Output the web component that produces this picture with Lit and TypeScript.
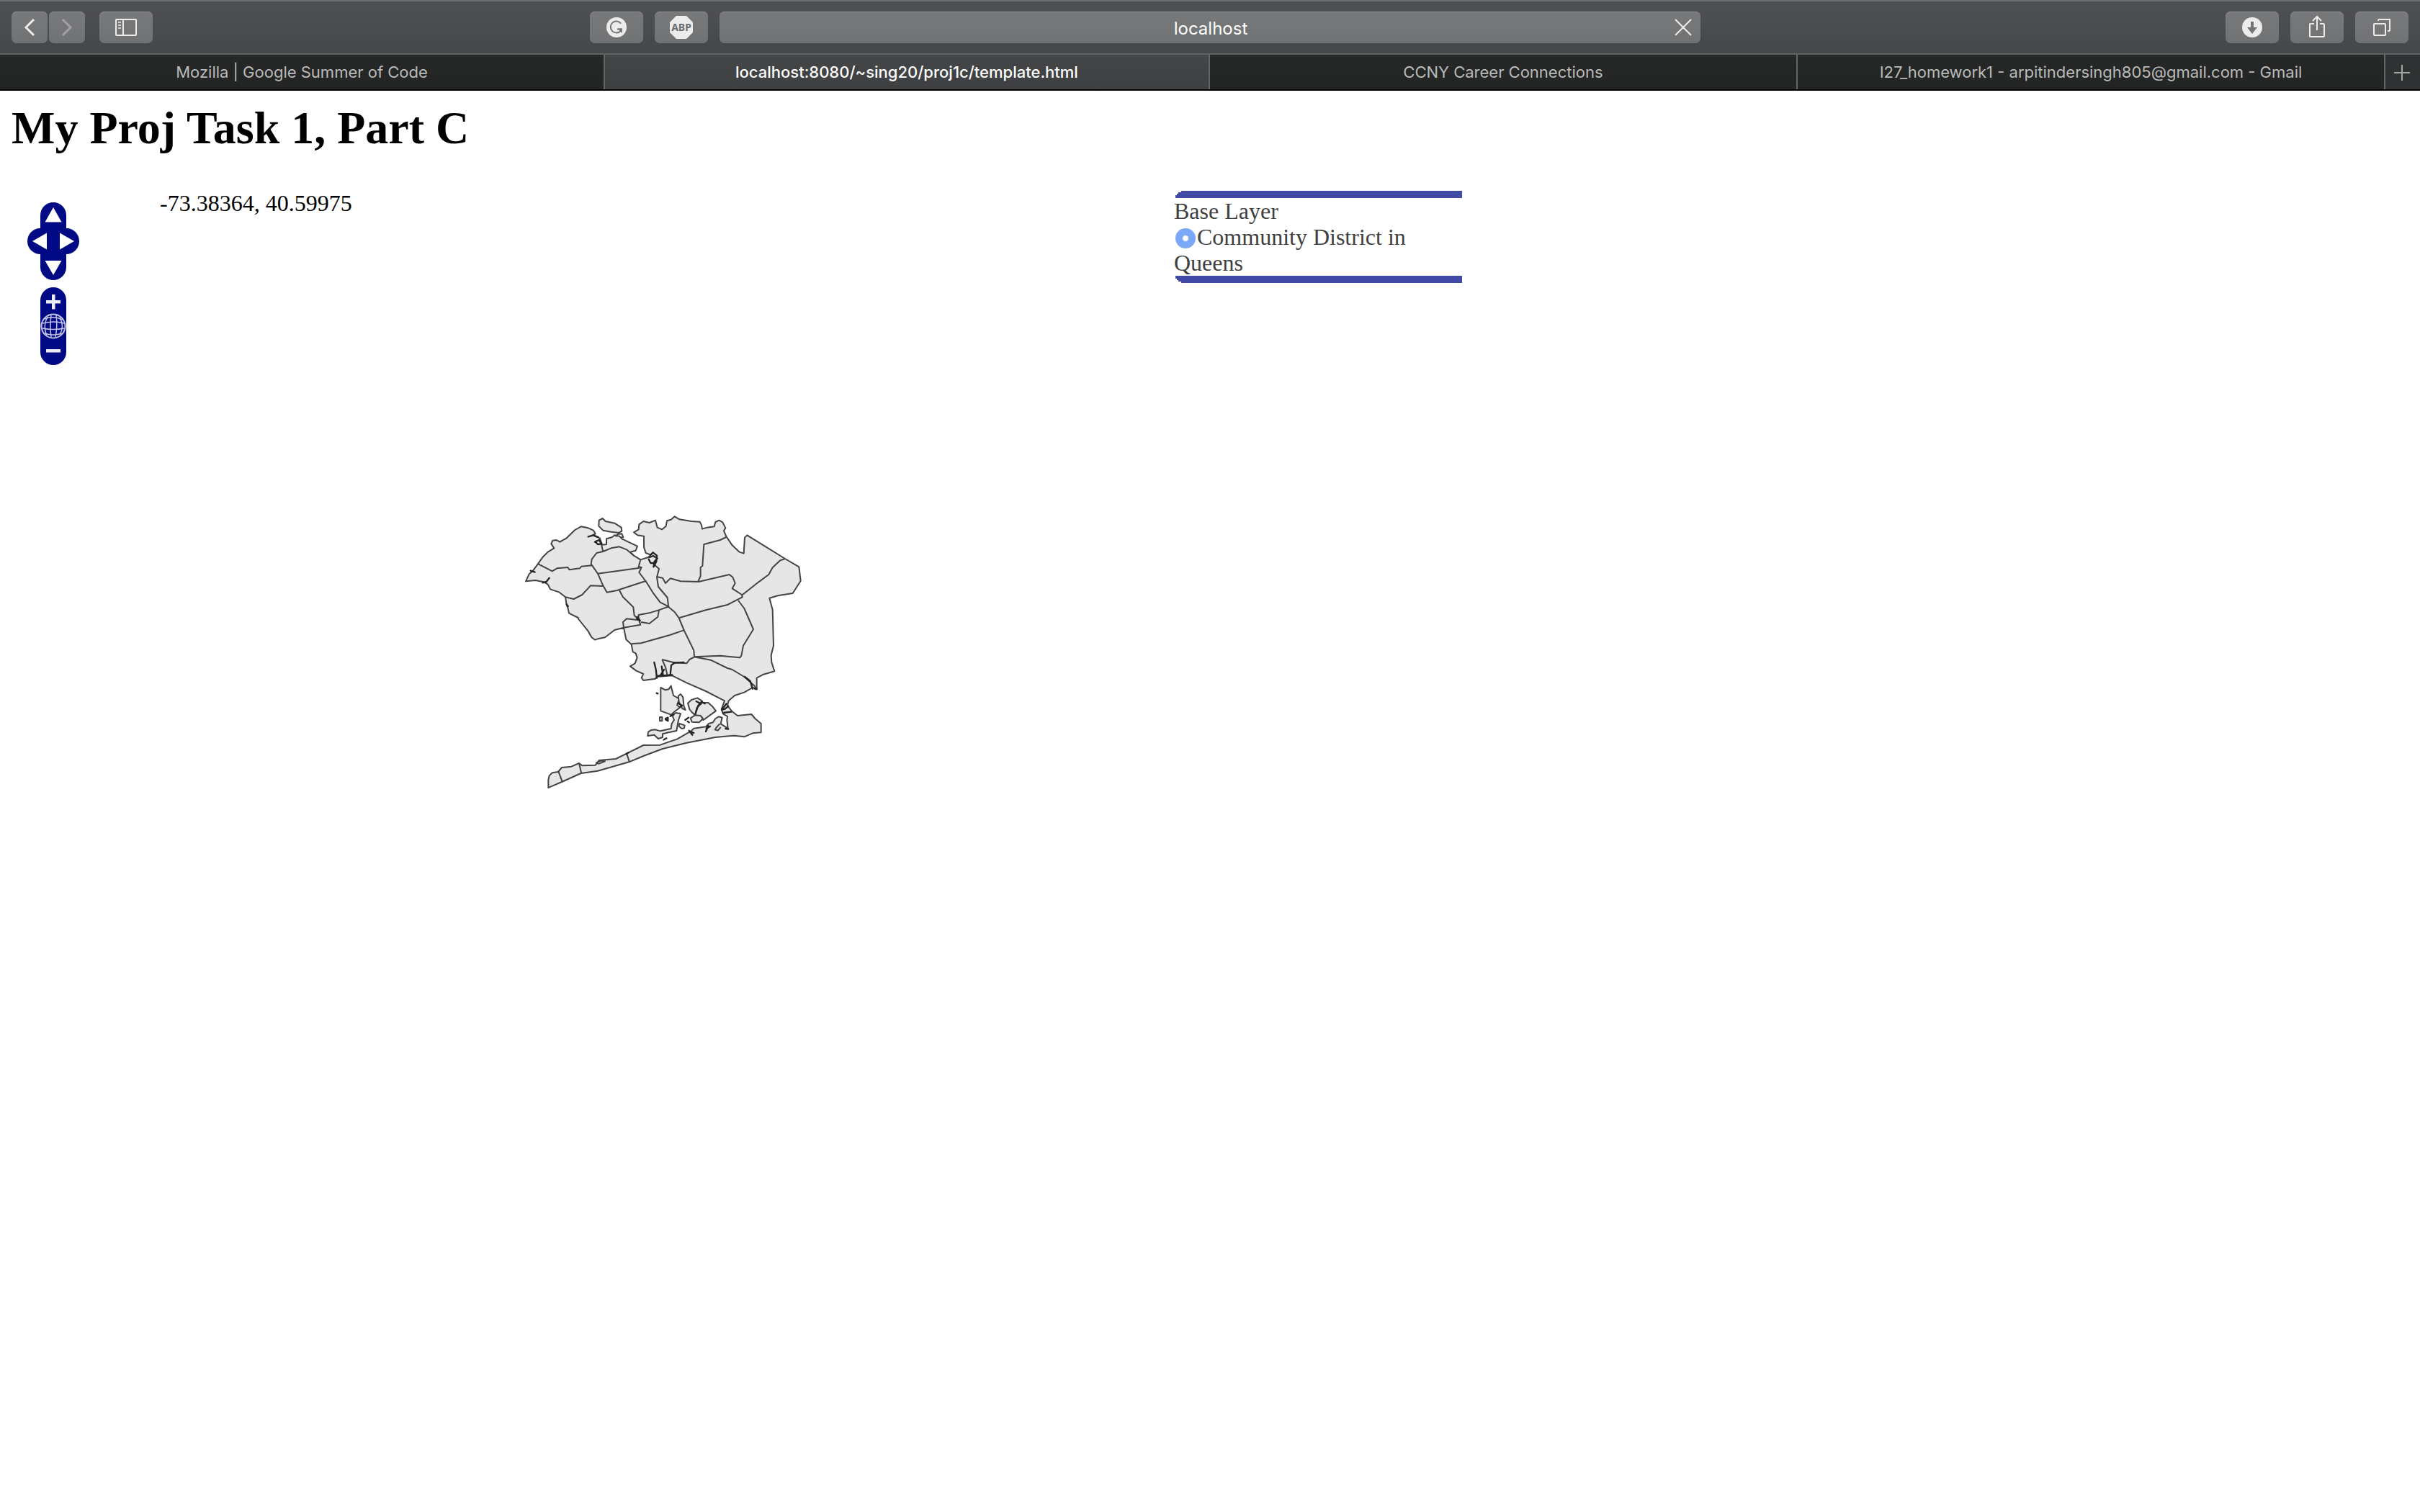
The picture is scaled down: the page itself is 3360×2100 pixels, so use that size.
import { LitElement, html, css, svg } from "lit";
import { customElement } from "lit/decorators.js";

const TABS = [
  { title: "Mozilla | Google Summer of Code", size: "wide" },
  { title: "localhost:8080/~sing20/proj1c/template.html", size: "wide active" },
  { title: "CCNY Career Connections", size: "" },
  { title: "I27_homework1 - arpitindersingh805@gmail.com - Gmail", size: "" },
];

const LAND =
  "30,322 44,292 60,278 82,248 100,222 122,200 148,184 136,166 142,152 158,150 172,158 200,142 235,108 260,94 290,100 312,110 320,124 308,130 338,142 348,170 366,168 366,145 390,138 400,130 420,134 432,146 495,176 488,194 466,200 480,215 508,232 540,222 550,212 530,204 522,180 522,134 495,130 480,118 500,106 502,85 520,72 545,78 570,68 578,98 598,106 614,92 618,70 635,65 650,52 670,64 720,72 755,74 762,88 765,104 785,98 815,94 820,75 835,68 850,76 862,100 855,112 865,135 890,172 920,200 938,206 942,140 952,130 1110,228 1168,262 1175,320 1142,372 1080,382 1045,392 1058,440 1062,590 1052,630 1054,660 1066,697 1020,710 992,725 992,770 975,765 940,785 900,798 875,820 870,840 890,865 912,882 970,876 985,894 1010,915 1010,952 975,955 940,970 900,965 820,972 700,995 600,1020 520,1050 460,1075 330,1112 260,1122 180,1158 124,1182 124,1150 128,1132 140,1120 165,1116 180,1098 220,1094 252,1080 265,1090 320,1088 335,1068 405,1062 450,1040 520,1005 590,1004 635,988 660,980 720,945 730,935 780,928 792,915 810,910 820,894 834,886 848,890 842,916 872,935 868,900 870,885 852,875 845,855 858,820 780,780 700,745 640,715 575,720 570,728 520,735 512,724 520,708 490,695 465,676 485,664 494,640 488,622 476,616 470,585 448,565 438,515 400,525 360,556 330,562 318,566 304,555 290,530 250,480 248,474 210,455 206,436 200,420 195,388 170,368 132,355 122,335 105,325 70,318";

const ISLANDS = [
  "335,68 350,60 362,72 400,80 428,98 430,112 418,120 385,116 352,110 334,92",
  "592,765 612,775 625,772 635,758 645,798 670,812 660,838 672,848 650,865 635,878 592,862",
  "665,800 675,792 685,805 688,840 695,858 682,852 668,825",
  "640,880 655,870 675,874 666,900 658,945 625,952 600,958 600,972 582,978 565,962 538,966 540,950 552,942 570,940 590,946 635,936 638,915 648,900",
  "670,915 692,922 690,934 680,936 668,926",
  "705,830 720,816 745,808 766,822 748,845 735,880 722,868 712,855",
  "765,828 790,828 806,842 822,862 770,900 735,882 742,850",
  "716,892 735,880 758,882 768,894 752,910 722,908",
  "588,888 598,888 598,904 588,904",
];

const BORDERS = [
  "82,250 140,280 160,268 205,264 212,274 255,268 262,260 305,256",
  "338,142 352,198 325,204 305,230 302,250 330,290 352,340 368,368 410,360 520,324 530,322 502,285 512,264 500,262 508,232",
  "352,198 385,184 420,178 450,190 480,215",
  "330,290 505,266",
  "195,388 230,396 265,378 300,340 352,342",
  "420,360 435,388 478,430 482,465 500,480 508,503 438,515 435,492 450,478 500,484 500,462 545,454 590,440 628,426",
  "530,322 560,370 590,410 620,425",
  "562,250 585,270 576,305 582,345 620,390 624,425",
  "585,442 580,470 545,498 510,492",
  "470,583 510,580 630,546 688,526",
  "620,425 650,450 668,475 690,528 730,610 732,635",
  "668,475 780,442 870,420 932,388 930,378 890,352 902,330 892,305 878,294 750,324 675,322 632,310 612,330 600,308 578,304",
  "865,138 840,150 772,168 766,258 758,264 758,300 748,322",
  "930,380 1000,325 1042,294 1058,265 1090,235 1110,228",
  "915,402 940,435 978,522 936,590 928,632 922,640 840,632 732,637 712,648 700,664 645,660 598,648",
  "732,637 800,650 870,684 890,690 940,720 980,755 992,770",
  "450,1040 462,1075",
  "252,1080 262,1124",
  "165,1112 182,1156",
  "322,1078 345,1070 360,1072 335,1082 322,1080",
  "838,916 825,930 818,940 830,944 842,930",
  "598,648 612,680 620,715",
  "404,136 412,126 430,124 436,138 424,140",
];

const CREEKS = [
  "290,136 312,130 332,138",
  "318,158 335,150 346,166 330,168 320,158",
  "550,212 560,202 576,215 574,240 562,262 566,240 578,226 560,216 546,222",
  "542,230 550,246 568,246",
  "50,278 68,284",
  "100,328 116,324 128,308",
  "200,418 206,426",
  "494,470 506,486 492,476",
  "565,660 572,690 576,725",
  "596,676 602,714 592,712 606,690",
  "650,662 636,672 632,712",
  "645,662 688,660",
  "580,716 640,712",
  "942,720 965,738 975,770 968,748",
  "992,772 984,770",
  "866,832 846,858 860,854 874,842",
  "852,870 886,866",
  "710,944 724,962 716,948 730,954",
  "780,948 790,924 782,936 798,926",
  "862,936 874,938",
  "736,876 748,840 762,824 776,832",
  "740,822 758,832",
  "664,830 682,840 672,846",
  "612,894 622,890 622,904 612,898",
  "605,982 616,976",
  "575,788 580,790",
  "694,900 708,890",
  "704,906 710,910",
  "448,1042 458,1036",
  "632,884 646,878",
];

@customElement("browser-toolbar")
class BrowserToolbar extends LitElement {
  static styles = css`
    :host { display: block; font-family: Inter, "Liberation Sans", sans-serif; }
    .bar {
      display: grid;
      grid-template-columns: minmax(0, 999fr) minmax(0, 1362fr) minmax(0, 999fr);
      align-items: center;
      height: 76px;
      box-sizing: border-box;
      border-top: 2px solid #6a6c6e;
      border-bottom: 2px solid #606263;
      background: linear-gradient(#505153, #454648);
    }
    .zone { display: flex; align-items: center; padding: 0 16px; }
    .history { display: flex; gap: 2px; margin-right: 20px; }
    .extensions { display: flex; gap: 16px; margin-left: auto; }
    .right { justify-content: flex-end; gap: 16px; }
    button { font: inherit; border: 0; margin: 0; padding: 0; cursor: default; }
    .tool {
      display: flex;
      align-items: center;
      justify-content: center;
      width: 74px;
      height: 44px;
      border-radius: 7px;
      background: linear-gradient(#78797b, #717274);
      box-shadow: inset 0 1px #8a8b8d;
      color: #ececec;
    }
    .narrow { width: 50px; }
    .dim { color: #a0a1a2; }
    .icon { display: block; width: 36px; height: 36px; fill: none; stroke: currentColor; stroke-width: 2; }
    .solid { fill: currentColor; stroke: none; }
    .cut { fill: none; stroke: #747577; stroke-width: 2; }
    .cutfill { fill: #747577; stroke: none; }
    .abp { font: bold 14px "Noto Sans", sans-serif; fill: #6a6b6d; stroke: none; text-anchor: middle; }
    .address {
      display: grid;
      grid-template-columns: 48px minmax(0, 1fr) 48px;
      align-items: center;
      height: 44px;
      border-radius: 7px;
      background: linear-gradient(#78797b, #717274);
      box-shadow: inset 0 1px #8a8b8d;
    }
    .url {
      grid-column: 2;
      width: 100%;
      box-sizing: border-box;
      border: 0;
      padding: 2px 0 0 2px;
      outline: none;
      background: none;
      color: #fff;
      font: 24px Inter, sans-serif;
      text-align: center;
    }
    .stop { background: none; color: #ececec; display: flex; justify-content: center; }
    .tabs {
      display: flex;
      height: 50px;
      box-sizing: border-box;
      border-bottom: 2px solid #000;
      background: linear-gradient(#262827, #232524);
    }
    .tab {
      flex: 816 1 0;
      min-width: 0;
      box-sizing: border-box;
      border-left: 2px solid #636566;
      background: none;
      color: #b9bab9;
      font-size: 22px;
      line-height: 44px;
      white-space: nowrap;
      overflow: hidden;
      text-overflow: ellipsis;
    }
    .wide { flex-grow: 840; }
    .tab:first-child { border-left: 0; }
    .active { background: linear-gradient(#454648, #3e3f41); color: #fff; font-weight: 500; }
    .add {
      flex: none;
      display: flex;
      align-items: center;
      justify-content: center;
      width: 50px;
      box-sizing: border-box;
      border-left: 2px solid #636566;
      background: #303133;
      color: #a5a6a6;
    }
  `;

  render() {
    return html`
      <div class="bar">
        <div class="zone">
          <div class="history">
            <button class="tool narrow" aria-label="Back">
              <svg class="icon" viewBox="0 0 36 36"><path d="M24 7 13 18 24 29" stroke-width="3"/></svg>
            </button>
            <button class="tool narrow dim" aria-label="Forward">
              <svg class="icon" viewBox="0 0 36 36"><path d="M12 7 23 18 12 29" stroke-width="3"/></svg>
            </button>
          </div>
          <button class="tool" aria-label="Show sidebar">
            <svg class="icon" viewBox="0 0 36 36">
              <rect x="4" y="7" width="28" height="22" rx="1"/>
              <path d="M14 7V29"/>
              <path d="M7 11h4M7 15h4M7 19h4" opacity=".75"/>
            </svg>
          </button>
          <div class="extensions">
            <button class="tool" aria-label="Grammarly">
              <svg class="icon" viewBox="0 0 36 36">
                <circle class="solid" cx="18" cy="18" r="14"/>
                <path class="cut" d="M24 12.5A8 8 0 1 0 24 22.5"/>
                <path class="cut" d="M19 20.500H25"/>
                <path class="cutfill" d="M20 19.500H26V26L23.500 24z"/>
              </svg>
            </button>
            <button class="tool" aria-label="Adblock Plus">
              <svg class="icon" viewBox="0 0 36 36">
                <path class="solid" d="M11 2H25L34 11V25L25 34H11L2 25V11z"/>
                <text class="abp" x="18" y="23">ABP</text>
              </svg>
            </button>
          </div>
        </div>
        <div class="address">
          <input class="url" type="text" aria-label="Address" .value=${"localhost"} />
          <button class="stop" aria-label="Stop loading">
            <svg class="icon" viewBox="0 0 36 36"><path d="M7 7 29 29M29 7 7 29"/></svg>
          </button>
        </div>
        <div class="zone right">
          <button class="tool" aria-label="Downloads">
            <svg class="icon" viewBox="0 0 36 36">
              <circle class="solid" cx="18" cy="18" r="14"/>
              <path class="cutfill" d="M16 10h4v8h5l-7 9-7-9h5z"/>
            </svg>
          </button>
          <button class="tool" aria-label="Share">
            <svg class="icon" viewBox="0 0 36 36">
              <path d="M14 13H9Q8 13 8 14V30Q8 31 9 31H27Q28 31 28 30V14Q28 13 27 13H22M18 22V4M12 9l6-6 6 6"/>
            </svg>
          </button>
          <button class="tool" aria-label="Show all tabs">
            <svg class="icon" viewBox="0 0 36 36">
              <rect x="7" y="13" width="16" height="16" rx="1"/>
              <path d="M13 9V8Q13 7 14 7H29V22Q29 23 28 23H26"/>
            </svg>
          </button>
        </div>
      </div>
      <nav class="tabs" aria-label="Tabs">
        ${TABS.map((t) => html`<button class="tab ${t.size}">${t.title}</button>`)}
        <button class="add" aria-label="New tab">
          <svg class="icon" viewBox="0 0 36 36"><path d="M17 8V30M6 19H28"/></svg>
        </button>
      </nav>
    `;
  }
}

@customElement("pan-zoom")
class PanZoom extends LitElement {
  static styles = css`
    :host { display: flex; flex-direction: column; align-items: center; gap: 10px; }
    .pan { display: grid; grid-template: repeat(3, 36px) / repeat(4, 18px); }
    .zoom { display: flex; flex-direction: column; }
    button { display: block; width: 36px; height: 36px; margin: 0; padding: 0; border: 0; background: #000a85; }
    .up { grid-area: 1 / 2 / 2 / 4; border-radius: 18px 18px 0 0; }
    .left { grid-area: 2 / 1 / 3 / 3; border-radius: 18px 0 0 18px; }
    .right { grid-area: 2 / 3 / 3 / 5; border-radius: 0 18px 18px 0; }
    .down { grid-area: 3 / 2 / 4 / 4; border-radius: 0 0 18px 18px; }
    .in { border-radius: 18px 18px 0 0; }
    .out { border-radius: 0 0 18px 18px; }
    svg { display: block; width: 36px; height: 36px; fill: #fff; }
    .sign { fill: #eeeefa; }
    .lines { fill: none; stroke: #c4c4e6; stroke-width: 2; }
  `;

  render() {
    return html`
      <div class="pan">
        <button class="up" aria-label="Pan up"><svg viewBox="0 0 36 36"><path d="M18 7 29.500 27.500H6.500z"/></svg></button>
        <button class="left" aria-label="Pan left"><svg viewBox="0 0 36 36"><path d="M7 18 27 6.500V29.500z"/></svg></button>
        <button class="right" aria-label="Pan right"><svg viewBox="0 0 36 36"><path d="M29 18 9 6.500V29.500z"/></svg></button>
        <button class="down" aria-label="Pan down"><svg viewBox="0 0 36 36"><path d="M18 29 29.500 9H6.500z"/></svg></button>
      </div>
      <div class="zoom">
        <button class="in" aria-label="Zoom in">
          <svg class="sign" viewBox="0 0 36 36"><path d="M16 10h4.500v8H28v4.500h-7.500v8H16v-8H8V18h8z"/></svg>
        </button>
        <button aria-label="Zoom to full extent">
          <svg viewBox="0 0 36 36">
            <g class="lines">
              <circle cx="18" cy="18" r="16.500"/>
              <path d="M15 3Q13 18 15 33M22 3Q24 18 21 33M10 5Q3 18 9 31M27 6Q34 18 27 30M6 8Q18 3 31 9M3 14Q18 10 33 14M3 21Q18 24 33 21M6 28Q18 32 30 28" stroke-width="1.500"/>
            </g>
          </svg>
        </button>
        <button class="out" aria-label="Zoom out">
          <svg class="sign" viewBox="0 0 36 36"><path d="M8 14h20v4.500H8z"/></svg>
        </button>
      </div>
    `;
  }
}

@customElement("district-map")
class DistrictMap extends LitElement {
  static styles = css`
    :host { display: block; }
    svg { display: block; width: 400px; height: 410px; }
    .land { fill: #e6e6e6; stroke: #444; stroke-width: 6; stroke-linejoin: round; }
    .line { fill: none; stroke: #444; stroke-width: 6; stroke-linejoin: round; }
    .creek { fill: none; stroke: #242424; stroke-width: 7; stroke-linecap: round; stroke-linejoin: round; }
  `;

  render() {
    return html`
      <svg viewBox="0 0 1200 1230" role="img" aria-label="Community districts in Queens">
        <polygon class="land" points=${LAND}></polygon>
        ${ISLANDS.map((p) => svg`<polygon class="land" points=${p}></polygon>`)}
        ${BORDERS.map((p) => svg`<polyline class="line" points=${p}></polyline>`)}
        ${CREEKS.map((p) => svg`<polyline class="creek" points=${p}></polyline>`)}
      </svg>
    `;
  }
}

@customElement("layer-switcher")
class LayerSwitcher extends LitElement {
  static styles = css`
    :host { display: block; width: 400px; color: #404040; font: 32px/36px "Liberation Serif", serif; }
    .edge { height: 10px; margin-left: 2px; background: #414aa5; }
    .top { clip-path: polygon(8px 0, 100% 0, 100% 100%, 0 100%, 0 6px, 2px 6px, 2px 4px, 4px 4px, 4px 2px, 8px 2px); }
    .bottom { clip-path: polygon(0 0, 100% 0, 100% 100%, 8px 100%, 8px 8px, 4px 8px, 4px 6px, 2px 6px, 2px 4px, 0 4px); }
    .choice { padding-right: 60px; }
    .radio {
      appearance: none;
      width: 28px;
      height: 28px;
      margin: 0 2px;
      border-radius: 50%;
      vertical-align: -5px;
      background: radial-gradient(circle, #fff 3px, #7ba7f9 5px);
    }
  `;

  render() {
    return html`
      <div class="edge top"></div>
      <div>Base Layer</div>
      <div class="choice"><input class="radio" type="radio" id="districts" name="base" checked /><label for="districts">Community District in Queens</label></div>
      <div class="edge bottom"></div>
    `;
  }
}

@customElement("app-root")
class AppRoot extends LitElement {
  static styles = css`
    :host { display: block; min-height: 100vh; background: #fff; color: #000; font-family: "Liberation Serif", serif; }
    .page { padding: 16px; }
    .heading { margin: 0 0 51px; font-size: 64px; line-height: 72px; font-weight: bold; }
    .map { display: flex; align-items: flex-start; }
    .controls { margin: 16px 0 0 22px; }
    .position { width: 498px; margin-left: 112px; font-size: 32px; line-height: 34px; }
    .drawing { margin-top: 435px; }
    .layers { margin-left: 510px; }
  `;

  render() {
    return html`
      <browser-toolbar></browser-toolbar>
      <main class="page">
        <h1 class="heading">My Proj Task 1, Part C</h1>
        <section class="map">
          <pan-zoom class="controls"></pan-zoom>
          <div class="position">-73.38364, 40.59975</div>
          <district-map class="drawing"></district-map>
          <layer-switcher class="layers"></layer-switcher>
        </section>
      </main>
    `;
  }
}
